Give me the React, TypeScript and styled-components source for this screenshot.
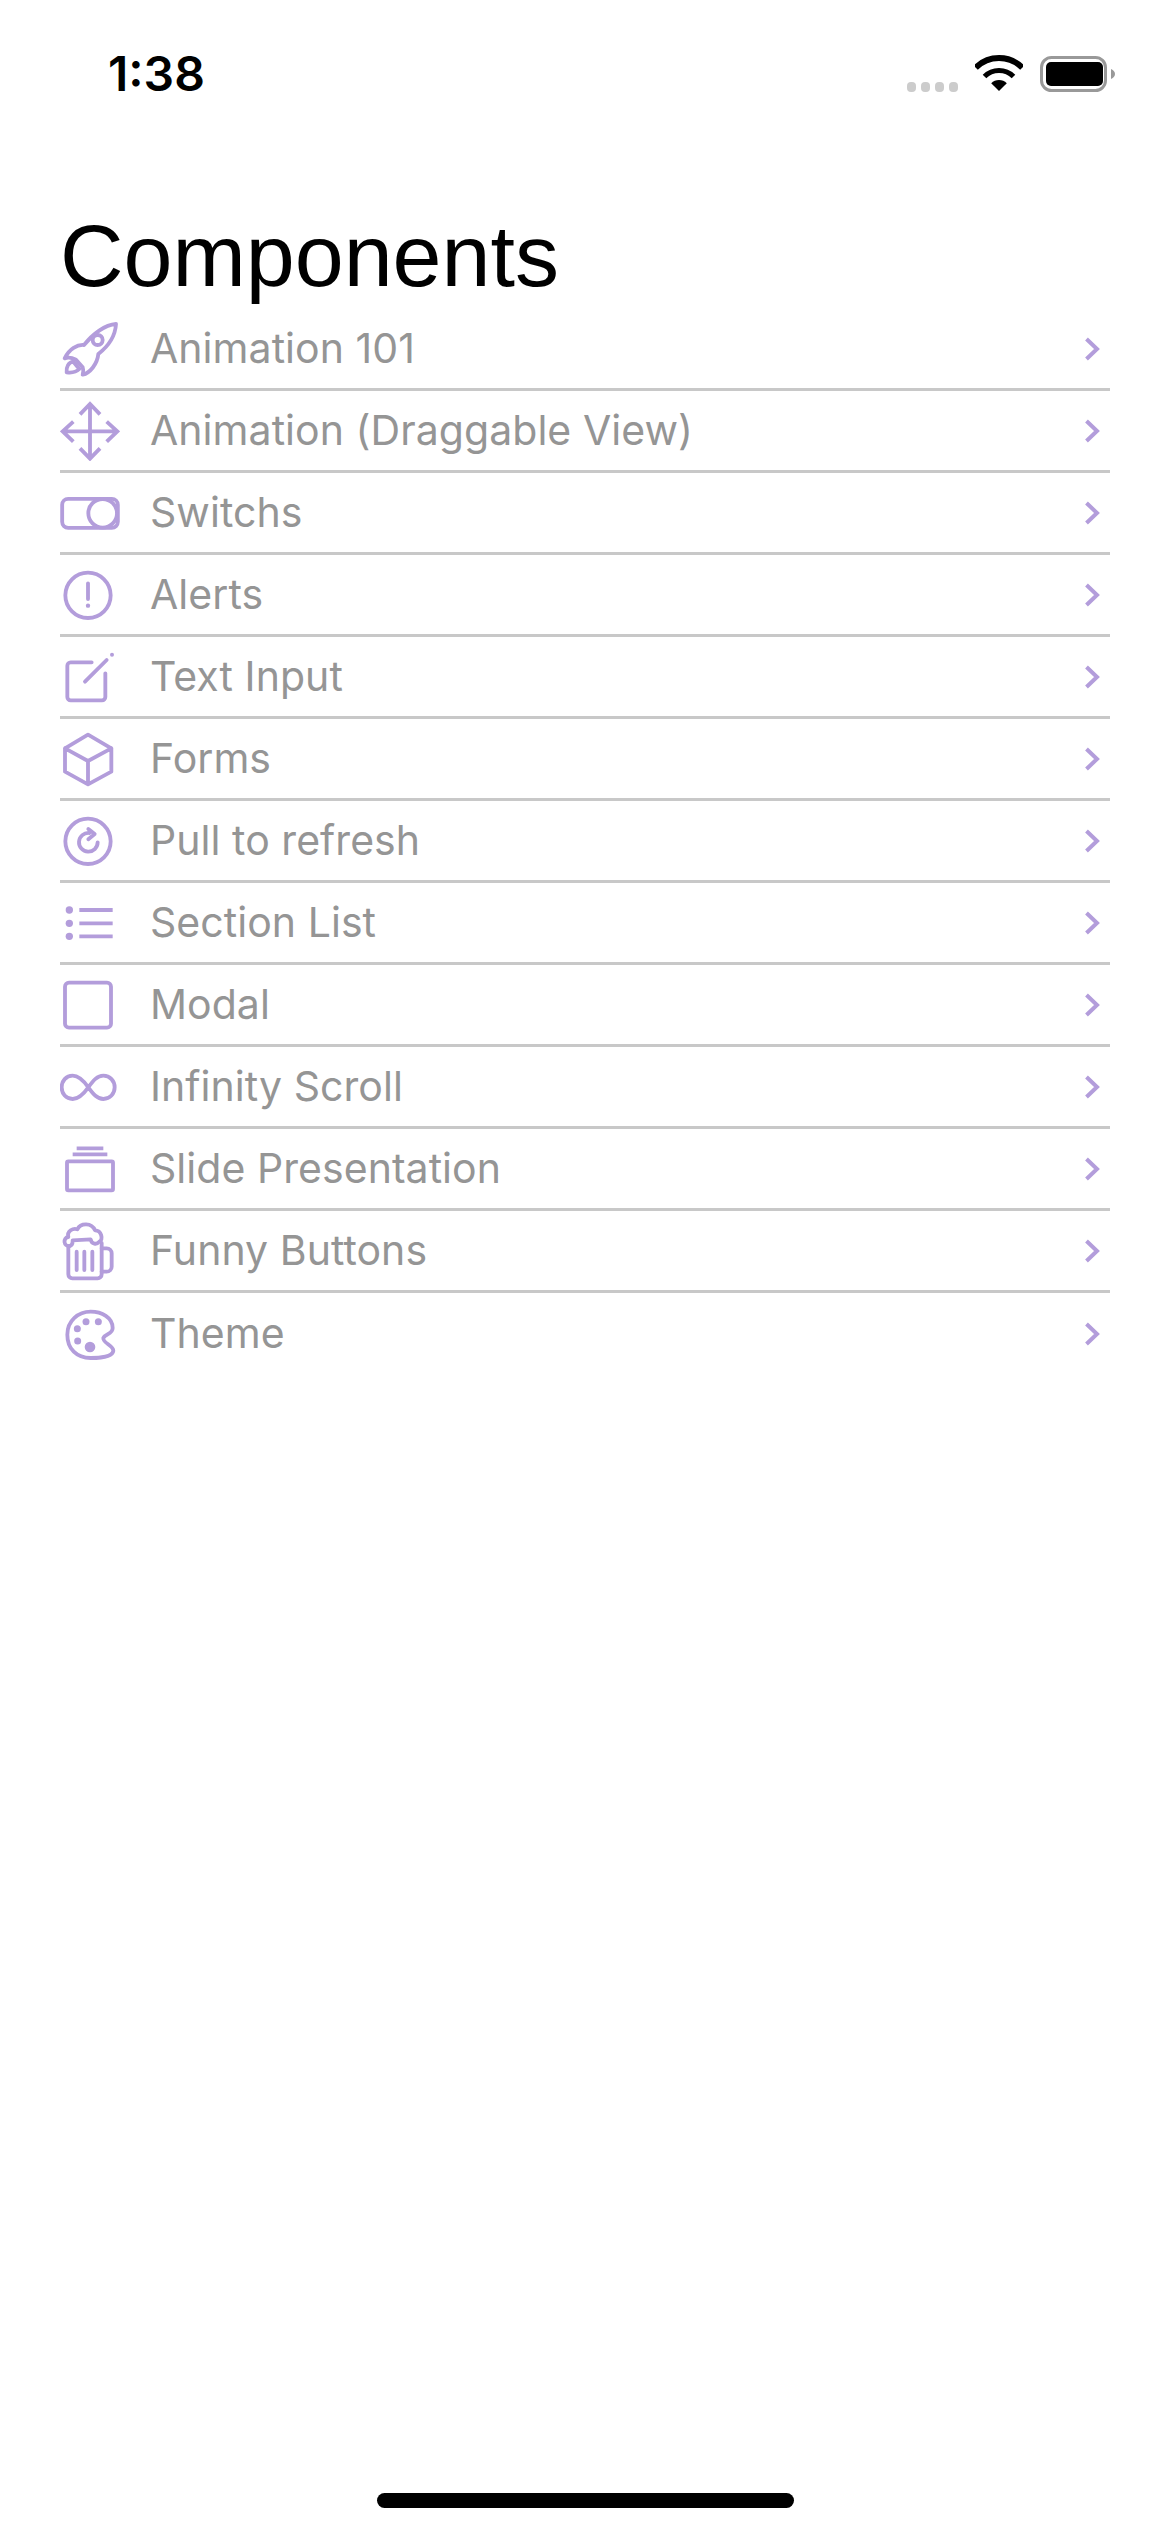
import React from "react";
import styled, { createGlobalStyle } from "styled-components";

const Global = createGlobalStyle`
  html, body { margin: 0; padding: 0; background: #fff; }
`;

const Screen = styled.div`
  position: relative;
  width: 1170px;
  height: 2532px;
  background: #fff;
  overflow: hidden;
  font-family: Inter, "Liberation Sans", sans-serif;
`;

const StatusBar = styled.div`
  height: 132px;
  display: flex;
  justify-content: space-between;
  align-items: flex-start;
  padding: 49px 55px 0 108px;
  box-sizing: border-box;
`;

const Clock = styled.div`
  font-weight: 600;
  font-size: 48px;
  line-height: 50px;
  color: #000;
`;

const StatusIcons = styled.div`
  display: flex;
  align-items: flex-start;
  gap: 17px;
  margin-top: 6px;
  height: 37px;
`;

const Signal = styled.div`
  display: flex;
  gap: 5px;
  align-self: flex-end;
`;

const SignalDot = styled.span`
  width: 9px;
  height: 10px;
  border-radius: 4px;
  background: #cccccc;
`;

const Wifi = styled.svg`
  width: 48px;
  height: 36px;
  fill: none;
  stroke: #000;
`;

const Battery = styled.svg`
  width: 75px;
  height: 36px;
  margin-top: 1px;
`;

const Title = styled.h1`
  margin: 0;
  padding: 71px 0 0 60px;
  font-family: "Liberation Sans", Arial, sans-serif;
  font-weight: 400;
  font-size: 88px;
  line-height: 106px;
  color: #000;
`;

const List = styled.div`
  margin: 0 60px;
`;

const Row = styled.div<{ $last?: boolean }>`
  height: 82px;
  box-sizing: border-box;
  display: flex;
  align-items: center;
  border-bottom: ${(p) => (p.$last ? "none" : "3px solid #c8c8c8")};
`;

const RowIcon = styled.svg`
  width: 60px;
  height: 60px;
  flex: none;
  fill: none;
  stroke: #b39ddb;
  stroke-width: 11.5;
  stroke-linecap: round;
  stroke-linejoin: round;
`;

const Dot = styled.circle`
  fill: #b39ddb;
  stroke: none;
`;

const SharpPath = styled.path`
  stroke-linecap: butt;
  stroke-linejoin: miter;
`;

const Label = styled.span`
  margin-left: 30px;
  padding-bottom: 2px;
  flex: 1;
  font-size: 41px;
  letter-spacing: 0.05px;
  color: #959595;
`;

const Chevron = styled.svg`
  width: 16px;
  height: 24px;
  flex: none;
  margin-right: 10px;
  fill: none;
  stroke: #b39ddb;
  stroke-width: 4;
`;

const HomeBar = styled.div`
  position: absolute;
  left: 377px;
  bottom: 24px;
  width: 417px;
  height: 15px;
  border-radius: 7.5px;
  background: #000;
`;

const items: { label: string; icon: React.ReactNode }[] = [
  {
    label: "Animation 101",
    icon: (
      <>
        <path d="M168 15C135 17 98 45 72 78C52 76 28 90 14 118C30 112 40 118 48 122L68 145C70 150 70 160 68 167C90 162 112 135 115 105C147 80 166 50 168 15Z" />
        <circle cx="113" cy="63" r="15" />
        <path d="M20 160C18 145 25 130 40 128L58 150C50 158 35 162 20 160Z" />
      </>
    ),
  },
  {
    label: "Animation (Draggable View)",
    icon: <SharpPath d="M90 9V173M8 91H172M60 40L90 9L120 40M40 62L8 91L40 122M140 62L172 91L140 122M60 142L90 173L120 142" />,
  },
  {
    label: "Switchs",
    icon: (
      <>
        <rect x="6.5" y="47.5" width="167" height="87" rx="18" />
        <circle cx="128" cy="91" r="43" />
      </>
    ),
  },
  {
    label: "Alerts",
    icon: (
      <>
        <circle cx="84" cy="91" r="68" />
        <path d="M84 55V102" />
        <Dot cx="84" cy="122" r="6.5" />
      </>
    ),
  },
  {
    label: "Text Input",
    icon: (
      <>
        <path d="M95 46H32a10 10 0 0 0 -10 10V150a10 10 0 0 0 10 10H126a10 10 0 0 0 10 -10V79" />
        <path d="M75 104L140 39" />
        <Dot cx="156" cy="23" r="6" />
      </>
    ),
  },
  {
    label: "Forms",
    icon: <path d="M84 17L154 58V128L84 166L15 128V58ZM15 58L84 96L154 58M84 96V166" />,
  },
  {
    label: "Pull to refresh",
    icon: (
      <>
        <circle cx="84" cy="91" r="68" />
        <path d="M88 66A28 28 0 1 0 113 94" />
        <path d="M85 54L104 69L85 85" />
      </>
    ),
  },
  {
    label: "Section List",
    icon: (
      <>
        <Dot cx="28" cy="51" r="11" />
        <Dot cx="28" cy="91" r="11" />
        <Dot cx="28" cy="130" r="11" />
        <SharpPath d="M58 51H158M58 91H158M58 130H158" />
      </>
    ),
  },
  {
    label: "Modal",
    icon: <rect x="15" y="23" width="138" height="135" rx="12" />,
  },
  {
    label: "Infinity Scroll",
    icon: <path d="M85 91C70 70 55 56 38 56C18 56 5 72 5 91C5 110 18 126 38 126C55 126 70 112 85 91C100 70 112 56 130 56C150 56 164 72 164 91C164 110 150 126 130 126C112 126 100 112 85 91Z" />,
  },
  {
    label: "Slide Presentation",
    icon: (
      <>
        <SharpPath d="M50 28H130M38 46H142" />
        <rect x="21" y="67" width="138" height="87" rx="4" />
      </>
    ),
  },
  {
    label: "Funny Buttons",
    icon: (
      <>
        <path d="M30 75C10 78 8 50 25 48C20 30 40 20 52 25C62 5 95 5 105 28C125 28 130 55 118 62C110 72 95 70 92 55L38 58C38 68 34 75 28 75" />
        <path d="M25 75V160a12 12 0 0 0 12 12H113a12 12 0 0 0 12 -12V66" />
        <path d="M125 82H140a15 15 0 0 1 15 15V137a15 15 0 0 1 -15 15H125" />
        <path d="M50 92V147M73 92V147M97 92V147" />
      </>
    ),
  },
  {
    label: "Theme",
    icon: (
      <>
        <path d="M92 23C125 23 158 40 158 72C158 92 135 88 130 102C127 116 160 125 160 140C158 158 120 162 92 162C50 162 22 135 22 92C22 50 55 23 92 23Z" />
        <Dot cx="78" cy="53" r="10.5" />
        <Dot cx="115" cy="53" r="10.5" />
        <Dot cx="52" cy="74" r="10.5" />
        <Dot cx="53" cy="111" r="10.5" />
        <Dot cx="90" cy="129" r="16" />
      </>
    ),
  },
];

export default function App() {
  return (
    <Screen>
      <Global />
      <StatusBar>
        <Clock>1:38</Clock>
        <StatusIcons>
          <Signal>
            <SignalDot />
            <SignalDot />
            <SignalDot />
            <SignalDot />
          </Signal>
          <Wifi viewBox="0 0 48 36">
            <path d="M0.7 12.7A33 33 0 0 1 47.3 12.7" strokeWidth="6" />
            <path d="M9.5 21.5A20.5 20.5 0 0 1 38.5 21.5" strokeWidth="5" />
            <path d="M24 36L16.2 28.2A11 11 0 0 1 31.8 28.2Z" fill="#000" stroke="none" />
          </Wifi>
          <Battery viewBox="0 0 75 36">
            <rect x="1.5" y="1.5" width="64" height="33" rx="10" fill="none" stroke="#999" strokeWidth="3" />
            <rect x="6" y="6" width="57" height="24" rx="5" fill="#000" />
            <path d="M71 13Q75 15 75 18Q75 21 71 23Z" fill="#999" />
          </Battery>
        </StatusIcons>
      </StatusBar>
      <Title>Components</Title>
      <List>
        {items.map((item, i) => (
          <Row key={item.label} $last={i === items.length - 1}>
            <RowIcon viewBox="0 0 180 180">{item.icon}</RowIcon>
            <Label>{item.label}</Label>
            <Chevron viewBox="0 0 16 24">
              <path d="M2.5 2L13 12L2.5 22" />
            </Chevron>
          </Row>
        ))}
      </List>
      <HomeBar />
    </Screen>
  );
}
